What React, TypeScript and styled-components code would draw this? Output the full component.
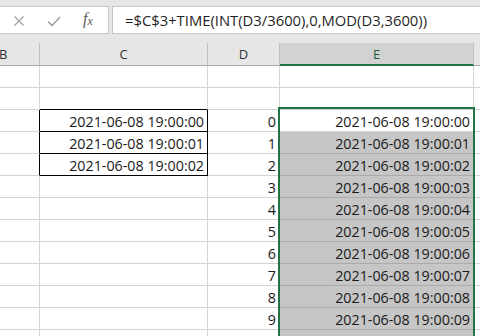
import * as React from 'react';
import styled, { createGlobalStyle } from 'styled-components';

const GRID = '#d4d4d4';
const SEL_GRID = '#ababab';
const GREEN = '#217346';
const FONT = '"Open Sans", "Noto Sans", sans-serif';

const COLUMNS = [
    { key: 'B', width: 40 },
    { key: 'C', width: 168 },
    { key: 'D', width: 72 },
    { key: 'E', width: 194 },
    { key: 'F', width: 40 },
];

const BASE = '2021-06-08 19:00:';
const pad = (n: number) => (n < 10 ? `0${n}` : `${n}`);

type CellModel = {
    text?: string;
    selected?: boolean;
    active?: boolean;
    rightBlack?: boolean;
    bottomBlack?: boolean;
};

// rows 1..13, only what is visible
const buildRows = (): CellModel[][] => {
    const rows: CellModel[][] = [];
    for (let r = 1; r <= 13; r++) {
        const boxed = r >= 3 && r <= 5;
        const inSel = r >= 3;
        const n = r - 3;
        rows.push([
            { rightBlack: boxed },
            {
                text: boxed ? BASE + pad(n) : undefined,
                rightBlack: boxed,
                bottomBlack: boxed || r === 2,
            },
            { text: inSel ? `${n}` : undefined },
            {
                text: inSel ? BASE + pad(n) : undefined,
                selected: r >= 4,
                active: r === 3,
            },
            {},
        ]);
    }
    return rows;
};

const GlobalStyle = createGlobalStyle`
    html, body {
        margin: 0;
        padding: 0;
        background: #ffffff;
        overflow: hidden;
    }
`;

const App: React.FC = () => {
    const rows = React.useMemo(buildRows, []);

    return (
        <>
            <GlobalStyle />
            <DivWindow>
                <DivFormulaArea>
                    <DivCommandBox>
                        <SpanCommand>
                            <svg width="12" height="12" viewBox="0 0 12 12">
                                <path d="M1.5 1.5 L10.5 10.5 M10.5 1.5 L1.5 10.5" stroke="#a3a3a3" strokeWidth="1.3" fill="none" />
                            </svg>
                        </SpanCommand>
                        <SpanCommand>
                            <svg width="14" height="11" viewBox="0 0 14 11">
                                <path d="M1 5.5 L5 9.5 L13 1" stroke="#a3a3a3" strokeWidth="1.6" fill="none" />
                            </svg>
                        </SpanCommand>
                        <SpanFx>
                            f<sub>x</sub>
                        </SpanFx>
                    </DivCommandBox>
                    <DivFormulaInput>=$C$3+TIME(INT(D3/3600),0,MOD(D3,3600))</DivFormulaInput>
                </DivFormulaArea>

                <DivSheet>
                    <DivHeaderRow>
                        {COLUMNS.map((col) => (
                            <DivColHeader key={col.key} $width={col.width} $selected={col.key === 'E'}>
                                {col.key === 'F' ? '' : col.key}
                            </DivColHeader>
                        ))}
                    </DivHeaderRow>
                    {rows.map((row, r) => (
                        <DivRow key={r}>
                            {row.map((cell, c) => (
                                <DivCell
                                    key={c}
                                    $width={COLUMNS[c].width}
                                    $selected={!!cell.selected}
                                    $rightBlack={!!cell.rightBlack}
                                    $bottomBlack={!!cell.bottomBlack}
                                >
                                    {cell.text}
                                </DivCell>
                            ))}
                        </DivRow>
                    ))}
                    <DivSelection />
                </DivSheet>
            </DivWindow>
        </>
    );
};

const DivWindow = styled.div`
    width: 480px;
    height: 336px;
    overflow: hidden;
    display: flex;
    flex-direction: column;
    background: #ffffff;
    font-family: ${FONT};
`;

const DivFormulaArea = styled.div`
    height: 43px;
    flex-shrink: 0;
    box-sizing: border-box;
    padding-top: 6px;
    background: #e6e6e6;
    display: flex;
    align-items: flex-start;
    gap: 3px;
`;

const DivCommandBox = styled.div`
    width: 110px;
    height: 28px;
    margin-left: -1px;
    box-sizing: border-box;
    background: #ffffff;
    border: 1px solid #c6c6c6;
    display: flex;
    align-items: center;
    padding-left: 13px;
    gap: 0;
`;

const SpanCommand = styled.span`
    width: 36px;
    display: flex;
    align-items: center;
    padding-top: 2px;

    &:first-child {
        width: 34px;
    }
`;

const SpanFx = styled.span`
    font-family: 'Liberation Serif', serif;
    font-style: italic;
    font-size: 16px;
    color: #5a5a5a;
    line-height: 1;
    padding-bottom: 2px;

    sub {
        font-size: 12px;
        vertical-align: -1px;
    }
`;

const DivFormulaInput = styled.div`
    flex: 1;
    height: 28px;
    margin-right: -2px;
    box-sizing: border-box;
    background: #ffffff;
    border: 1px solid #c6c6c6;
    padding-left: 12px;
    font-size: 14.8px;
    line-height: 26px;
    color: #1f1f1f;
    white-space: nowrap;
`;

const DivSheet = styled.div`
    position: relative;
    flex: 1;
    overflow: hidden;
`;

const DivHeaderRow = styled.div`
    display: flex;
    height: 23px;
    background: #e6e6e6;
`;

const DivColHeader = styled.div<{ $width: number; $selected: boolean }>`
    width: ${({ $width }) => $width}px;
    flex-shrink: 0;
    box-sizing: border-box;
    border-right: 1px solid #c0c0c0;
    border-bottom: ${({ $selected }) => ($selected ? `2px solid ${GREEN}` : '1px solid #ababab')};
    background: ${({ $selected }) => ($selected ? '#d2d2d2' : '#e6e6e6')};
    color: ${({ $selected }) => ($selected ? '#1e5b3a' : '#333333')};
    font-size: 13px;
    display: flex;
    align-items: center;
    justify-content: center;

    &:first-child {
        justify-content: flex-start;
        text-indent: -1px;
    }
`;

const DivRow = styled.div`
    display: flex;
    height: 22px;
`;

const DivCell = styled.div<{
    $width: number;
    $selected: boolean;
    $rightBlack: boolean;
    $bottomBlack: boolean;
}>`
    width: ${({ $width }) => $width}px;
    flex-shrink: 0;
    box-sizing: border-box;
    border-right: 1px solid ${({ $rightBlack }) => ($rightBlack ? '#000000' : GRID)};
    border-bottom: 1px solid
        ${({ $bottomBlack, $selected }) => ($bottomBlack ? '#000000' : $selected ? SEL_GRID : GRID)};
    background: ${({ $selected }) => ($selected ? '#c6c6c6' : '#ffffff')};
    color: #1a1a1a;
    font-size: 14.3px;
    line-height: 21px;
    padding: 1px 3px 0 0;
    text-align: right;
    white-space: nowrap;
    overflow: hidden;
`;

const DivSelection = styled.div`
    position: absolute;
    left: 278px;
    top: 64px;
    width: 197px;
    height: 400px;
    box-sizing: border-box;
    border: 2px solid ${GREEN};
    pointer-events: none;
`;

export default App;
